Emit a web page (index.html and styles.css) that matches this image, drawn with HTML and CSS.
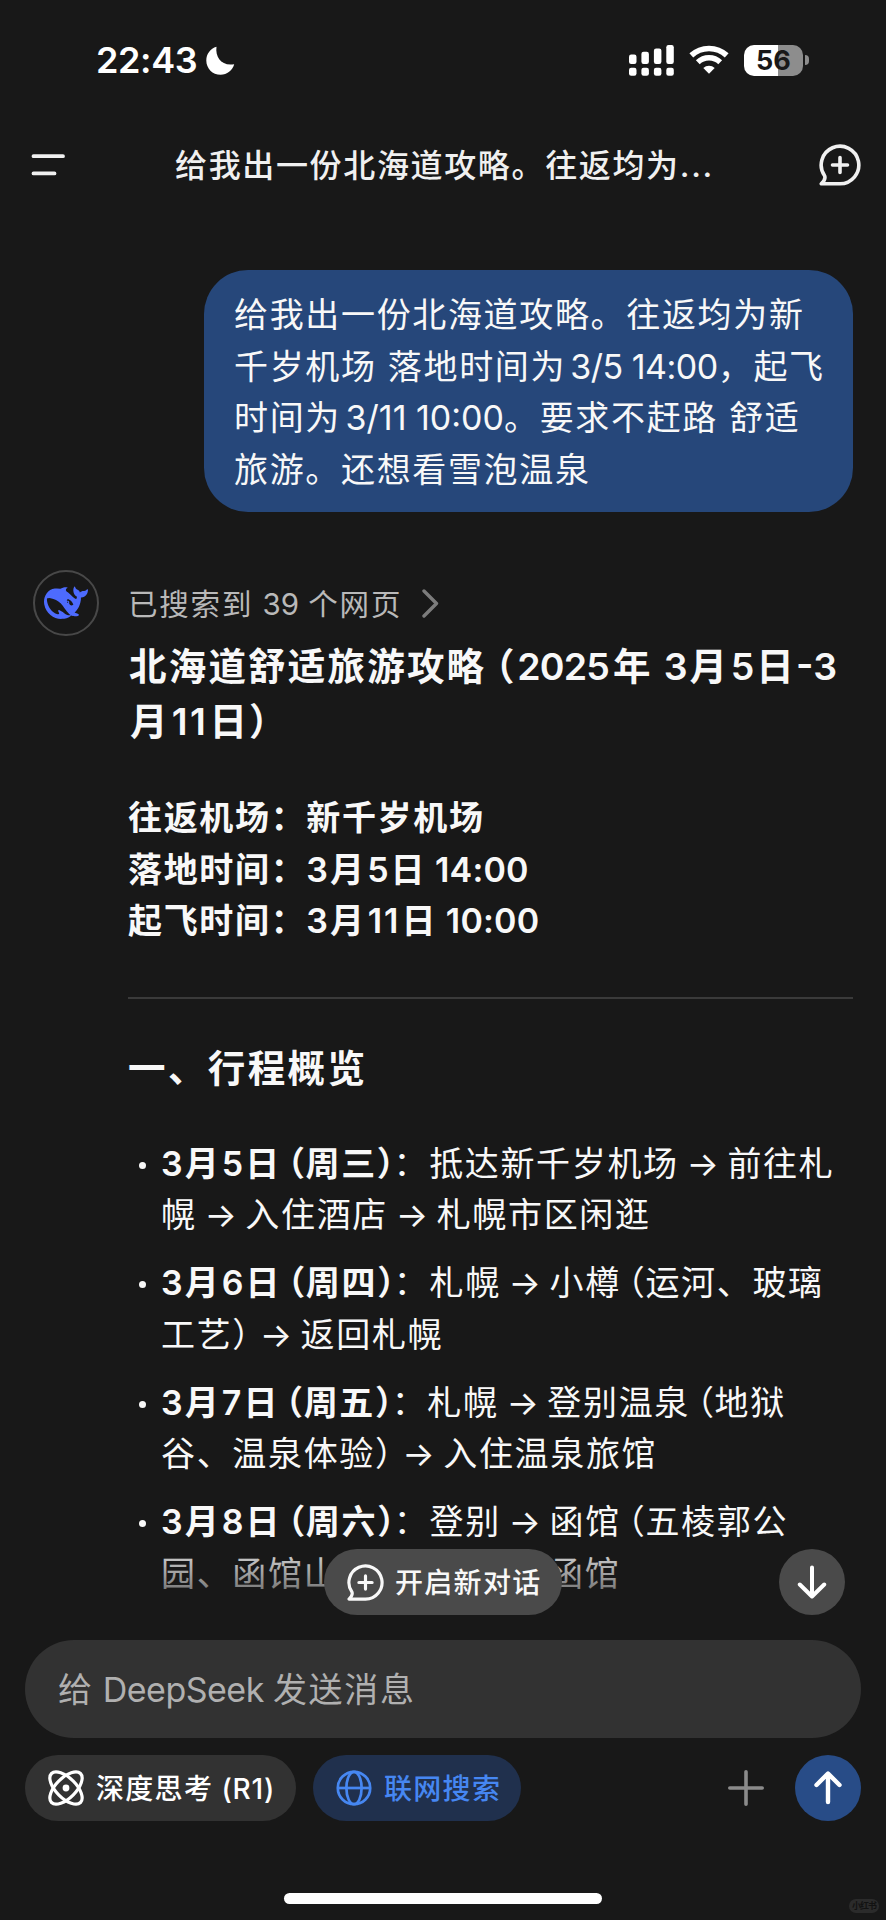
FILE: index.html
```html
<!DOCTYPE html>
<html lang="zh-CN">
<head>
<meta charset="utf-8">
<title>DeepSeek</title>
<link rel="stylesheet" href="styles.css">
</head>
<body>
<svg width="0" height="0" class="defs" aria-hidden="true">
  <symbol id="chat-plus" viewBox="0 0 42 42">
    <path d="M21 39.8A18.8 18.8 0 1 0 5.6 31.8C6.6 34 5.6 36.500 2.300 39.800Z" fill="none" stroke="currentColor" stroke-width="3.600" stroke-linejoin="round"/>
    <path d="M21 13.500v15M13.500 21h15" fill="none" stroke="currentColor" stroke-width="3.600" stroke-linecap="round"/>
  </symbol>
</svg>
<div class="phone">
  <div class="status">
    <span class="clock">22:43</span>
    <svg class="moon" viewBox="0 0 29 29"><path d="M10.500 0.800C9 11.500 16 20.500 28.200 18.200C26.500 24.500 21 28.700 14.600 28.700C6.500 28.700 0.300 22.400 0.300 14.400C0.300 8.200 4.200 2.600 10.500 0.800Z" fill="#fff"/></svg>
    <svg class="signal" viewBox="0 0 45 31" fill="#fff">
      <rect x="0" y="9.600" width="7.500" height="9.400" rx="2.200"/><rect x="12.400" y="6.700" width="7.500" height="12.300" rx="2.200"/><rect x="24.900" y="3.500" width="7.500" height="15.500" rx="2.200"/><rect x="37.300" y="0" width="7.500" height="19" rx="2.200"/>
      <rect x="0" y="22.800" width="7.500" height="8" rx="2.200"/><rect x="12.400" y="22.800" width="7.500" height="8" rx="2.200"/><rect x="24.900" y="22.800" width="7.500" height="8" rx="2.200"/><rect x="37.300" y="22.800" width="7.500" height="8" rx="2.200"/>
    </svg>
    <svg class="wifi" viewBox="0 0 40 29">
      <path d="M2.300 10.400A26 26 0 0 1 37.700 10.400" fill="none" stroke="#fff" stroke-width="5.600"/>
      <path d="M8.800 17.200A16.500 16.500 0 0 1 31.200 17.200" fill="none" stroke="#fff" stroke-width="5.600"/>
      <path d="M20 28.800L14.300 23A8.500 8.500 0 0 1 25.700 23Z" fill="#fff"/>
    </svg>
    <div class="battery"><span>56</span></div>
    <i class="nub"></i>
  </div>

  <div class="header">
    <svg class="menu" viewBox="0 0 34 24"><path d="M2.500 3.200H32M2.500 20.400H23.500" stroke="#f0f0f0" stroke-width="3.800" stroke-linecap="round"/></svg>
    <div class="title">给我出一份北海道攻略。往返均为<span class="dots">...</span></div>
    <svg class="new"><use href="#chat-plus"/></svg>
  </div>

  <div class="chat">
    <div class="bubble">
      <p>给我出一份北海道攻略。往返均为新</p>
      <p>千岁机场 落地时间为<span class="n g"> 3/5 14:00</span>，起飞</p>
      <p>时间为<span class="n g wide"> 3/11 10:00</span>。要求不赶路 舒适</p>
      <p>旅游。还想看雪泡温泉</p>
    </div>

    <div class="answer">
      <div class="avatar"><svg viewBox="0 0 24 24"><path fill="#4d6bfe" d="M23.748 4.482c-.254-.124-.364.113-.512.234-.051.039-.094.09-.137.136-.372.397-.806.657-1.373.626-.829-.046-1.537.214-2.163.848-.133-.782-.575-1.248-1.247-1.548-.352-.156-.708-.311-.955-.65-.172-.241-.219-.51-.305-.774-.055-.16-.11-.323-.293-.35-.2-.031-.278.136-.356.276-.313.572-.434 1.202-.422 1.84.027 1.436.633 2.58 1.838 3.393.137.093.172.187.129.323-.082.28-.18.552-.266.833-.055.179-.137.217-.329.14a5.526 5.526 0 01-1.736-1.18c-.857-.828-1.631-1.742-2.597-2.458a11.365 11.365 0 00-.689-.471c-.985-.957.13-1.743.388-1.836.27-.098.093-.432-.779-.428-.872.004-1.67.295-2.687.684a3.055 3.055 0 01-.465.137 9.597 9.597 0 00-2.883-.102c-1.885.21-3.39 1.102-4.497 2.623C.082 8.606-.231 10.684.152 12.85c.403 2.284 1.569 4.175 3.36 5.653 1.858 1.533 3.997 2.284 6.438 2.14 1.482-.085 3.133-.284 4.994-1.86.47.234.962.327 1.78.397.63.059 1.236-.03 1.705-.128.735-.156.684-.837.419-.961-2.155-1.004-1.682-.595-2.113-.926 1.096-1.296 2.746-2.642 3.392-7.003.05-.347.007-.565 0-.845-.004-.17.035-.237.23-.256a4.173 4.173 0 001.545-.475c1.396-.763 1.96-2.015 2.093-3.517.02-.23-.004-.467-.247-.588zM11.581 18c-2.089-1.642-3.102-2.183-3.52-2.16-.392.024-.321.471-.235.763.09.288.207.486.371.739.114.167.192.416-.113.603-.673.416-1.842-.14-1.897-.167-1.361-.802-2.5-1.86-3.301-3.307-.774-1.393-1.224-2.887-1.298-4.482-.02-.386.093-.522.477-.592a4.696 4.696 0 011.529-.039c2.132.312 3.946 1.265 5.468 2.774.868.86 1.525 1.887 2.202 2.891.72 1.066 1.494 2.082 2.48 2.914.348.292.625.514.891.677-.802.09-2.14.11-3.054-.614zm1-6.44a.306.306 0 01.415-.287.302.302 0 01.2.288.306.306 0 01-.31.307.303.303 0 01-.304-.308zm3.11 1.596c-.2.081-.399.151-.59.16a1.245 1.245 0 01-.798-.254c-.274-.23-.47-.358-.552-.758a1.73 1.73 0 01.016-.588c.07-.327-.008-.537-.239-.727-.187-.156-.426-.199-.688-.199a.559.559 0 01-.254-.078c-.11-.054-.2-.19-.114-.358.028-.054.16-.186.192-.21.356-.202.767-.136 1.146.016.352.144.618.408 1.001.782.391.451.462.576.685.914.176.265.336.537.445.848.067.195-.019.354-.25.452z"/></svg></div>
      <div class="content">
        <div class="search"><div>已搜索到<span class="count"> 39 </span>个网页</div><svg viewBox="0 0 17 29"><path d="M2 2L14.500 14.500L2 27" fill="none" stroke="#7c7c7c" stroke-width="3.400" stroke-linecap="round" stroke-linejoin="round"/></svg></div>
        <h1><span class="line">北海道舒适旅游攻略<i class="po">（</i><span class="n year">2025</span>年<span class="n d"> 3</span>月<span class="n d">5</span>日<span class="n d end">-3</span></span><span class="line second">月<span class="d2">11</span>日）</span></h1>
        <div class="facts">
          <p>往返机场：新千岁机场</p>
          <p>落地时间：<span class="d first">3</span>月<span class="d">5</span>日<span class="t"> 14:00</span></p>
          <p>起飞时间：<span class="d first">3</span>月<span class="d2">11</span>日<span class="t"> 10:00</span></p>
        </div>
        <hr>
        <h2>一、行程概览</h2>
        <ul>
          <li><span class="line"><b><span class="d first">3</span>月<span class="d">5</span>日<i class="po">（</i>周三）</b>：抵达新千岁机场<span class="ar"> → </span>前往札</span><span class="line">幌<span class="ar"> → </span>入住酒店<span class="ar"> → </span>札幌市区闲逛</span></li>
          <li><span class="line"><b><span class="d first">3</span>月<span class="d">6</span>日<i class="po">（</i>周四）</b>：札幌<span class="ar"> → </span>小樽<i class="po">（</i>运河、玻璃</span><span class="line">工艺<i class="pc">）</i><span class="ar"> → </span>返回札幌</span></li>
          <li><span class="line"><b><span class="d first">3</span>月<span class="d">7</span>日<i class="po">（</i>周五）</b>：札幌<span class="ar"> → </span>登别温泉<i class="po">（</i>地狱</span><span class="line">谷、温泉体验<i class="pc">）</i><span class="ar"> → </span>入住温泉旅馆</span></li>
          <li><span class="line"><b><span class="d first">3</span>月<span class="d">8</span>日<i class="po">（</i>周六）</b>：登别<span class="ar"> → </span>函馆<i class="po">（</i>五棱郭公</span><span class="line"><span class="lead">园、函馆山</span>函馆</span></li>
        </ul>
      </div>
    </div>
    <div class="fade"></div>
    <div class="floating">
      <div class="newchat"><svg><use href="#chat-plus"/></svg><span>开启新对话</span></div>
      <div class="down"><svg viewBox="0 0 32 34"><path d="M16 2.500V31M3.800 19.500L16 31.500L28.200 19.500" fill="none" stroke="#fff" stroke-width="4" stroke-linecap="round" stroke-linejoin="round"/></svg></div>
    </div>
  </div>

  <div class="composer">
    <div class="input">给<span class="n"> DeepSeek </span>发送消息</div>
    <div class="tools">
      <div class="pill think"><svg viewBox="0 0 36 36"><g fill="none" stroke="#fff" stroke-width="3.200"><ellipse cx="18" cy="18" rx="20.500" ry="10" transform="rotate(45 18 18)"/><ellipse cx="18" cy="18" rx="20.500" ry="10" transform="rotate(-45 18 18)"/></g><circle cx="18" cy="18" r="3.400" fill="#fff"/></svg><div>深度思考<span class="r1"> (R1)</span></div></div>
      <div class="pill web"><svg viewBox="0 0 36 36"><g fill="none" stroke="#4687f2" stroke-width="2.700"><circle cx="18" cy="18" r="16.200"/><ellipse cx="18" cy="18" rx="7.600" ry="16.200"/><path d="M2 18H34"/></g></svg><div>联网搜索</div></div>
      <svg class="plus" viewBox="0 0 36 36"><path d="M18 1.800V34.200M1.800 18H34.200" stroke="#8b8b8b" stroke-width="3.600" stroke-linecap="round"/></svg>
      <div class="send"><svg viewBox="0 0 32 34"><path d="M16 31V3M4.500 14L16 2.500L27.500 14" fill="none" stroke="#fff" stroke-width="4.400" stroke-linecap="round" stroke-linejoin="round"/></svg></div>
    </div>
    <div class="home"></div>
    <div class="mark">小红书</div>
  </div>
</div>
</body>
</html>
```
FILE: styles.css
```css
* { box-sizing: border-box; }
body { margin: 0; background: #181818; }
p, h1, h2, ul { margin: 0; padding: 0; font-weight: inherit; }
i { font-style: normal; }
svg { display: block; flex: none; }
.defs { position: absolute; }

.phone {
  width: 886px;
  height: 1920px;
  display: flex;
  flex-direction: column;
  overflow: hidden;
  background: #181818;
  color: #f8f8f8;
  font-family: Inter, "Noto Sans CJK SC", sans-serif;
  font-size: 34px;
  letter-spacing: 1.66px;
  white-space: nowrap;
}
.line { display: block; }

/* spacing of Latin digits and full-width brackets inside Chinese text */
.n { letter-spacing: -0.5px; }
.n.g { margin-left: -5px; }
.n.wide { letter-spacing: 0; }
.d { letter-spacing: 0; margin: 0 2px 0 1.5px; }
.d.first { margin-left: 0; }
.d2 { letter-spacing: 2px; margin: 0 1px 0 2px; }
.t { letter-spacing: 0.2px; }
.po, .pc { font-feature-settings: "halt"; letter-spacing: 0.6px; }
.po { margin-left: 7px; }
.pc { margin-right: 2px; }
.ar { letter-spacing: 0.2px; margin: 0 -1.500px 0 -2px; }

/* status bar */
.status { height: 120px; padding: 0 77px 0 96px; display: flex; align-items: center; }
.clock { font-size: 36px; font-weight: 600; letter-spacing: -0.4px; width: 110px; color: #fff; }
.moon { width: 29px; height: 29px; }
.signal { width: 45px; height: 31px; margin-left: auto; }
.wifi { width: 40px; height: 29px; margin: 0 15px 2px; }
.battery {
  width: 59px;
  height: 31px;
  border-radius: 10px;
  background: linear-gradient(90deg, #fff 57%, #8d8d8d 57%);
  color: #181818;
  font-size: 27px;
  font-weight: 700;
  letter-spacing: 0;
  line-height: 31px;
  text-align: center;
}
.nub { width: 4px; height: 10px; margin-left: 2px; border-radius: 0 5px 5px 0; background: #8d8d8d; }

/* header */
.header { height: 90px; padding: 0 25px 0 31px; display: flex; align-items: center; justify-content: space-between; color: #f0f0f0; }
.menu { width: 34px; height: 24px; }
.title { font-size: 32px; font-weight: 500; letter-spacing: 1.65px; padding: 0 0 4px 5px; }
.dots { letter-spacing: 1.7px; }
.new { width: 42px; height: 42px; }

/* conversation */
.chat { position: relative; height: 1422px; padding: 60px 33px 0; overflow: hidden; }
.bubble { width: 649px; height: 242px; margin-left: auto; padding: 19px 30px 0; border-radius: 44px; background: #26477a; line-height: 51.600px; }
.answer { display: flex; padding-top: 58px; }
.avatar { width: 66px; height: 66px; border: 2px solid #484848; border-radius: 50%; display: flex; align-items: center; justify-content: center; }
.avatar svg { width: 44px; height: 44px; }
.content { width: 725px; margin-left: 29px; }
.search { height: 66px; display: flex; align-items: center; color: #b9b9b9; font-size: 29.500px; letter-spacing: 1.8px; white-space: pre; }
.search div { padding-bottom: 2px; }
.search svg { width: 17px; height: 29px; margin-left: 20px; }
.count { letter-spacing: 0; margin: 0 1px; }
h1 { font-size: 37.500px; font-weight: 600; letter-spacing: 2.2px; line-height: 55px; margin-top: 3px; padding-left: 1px; }
h1 .po { margin: 0 2px 0 9.500px; }
h1 .year { margin-right: 4px; letter-spacing: -0.8px; }
h1 .d { letter-spacing: 0; }
h1 .d.end { margin: 0; }
h1 .second { padding-left: 1px; }
h1 .d2 { letter-spacing: 2.500px; margin-right: 1px; }
.facts { font-weight: 600; line-height: 51.600px; margin-top: 43px; }
hr { height: 2px; margin: 50px 0 0; border: 0; background: #3a3a3a; }
h2 { font-size: 37.500px; font-weight: 600; letter-spacing: 2.4px; line-height: 56px; margin-top: 42px; }
ul { list-style: none; margin-top: 41px; line-height: 51.600px; }
li { position: relative; padding-left: 33px; margin-bottom: 16.300px; }
li::before { content: ""; position: absolute; left: 11px; top: 24px; width: 7px; height: 7px; border-radius: 50%; background: #f8f8f8; }
li b { font-weight: 600; margin-right: -2px; }
.lead { display: inline-block; width: 388px; }

.fade { position: absolute; left: 0; right: 0; bottom: 0; height: 96px; background: linear-gradient(rgba(24,24,24,0), #181818); }
.floating { position: absolute; left: 324px; right: 41px; top: 1339px; display: flex; justify-content: space-between; }
.newchat { width: 238px; height: 66px; border-radius: 33px; background: #4a4a4a; display: flex; align-items: center; gap: 11px; padding-left: 23px; font-size: 28px; font-weight: 500; letter-spacing: 1.3px; }
.newchat svg { width: 37px; height: 37px; }
.newchat span { padding-bottom: 2px; }
.down, .send { width: 66px; height: 66px; border-radius: 50%; background: #4a4a4a; display: flex; align-items: center; justify-content: center; }
.down svg, .send svg { width: 32px; height: 34px; }

/* composer */
.composer { position: relative; padding: 8px 25px 0; }
.input { height: 98px; border-radius: 49px; background: #323232; padding-left: 33px; line-height: 100px; color: #b0b0b0; white-space: pre; }
.tools { display: flex; align-items: center; margin-top: 17px; }
.pill { height: 66px; border-radius: 33px; display: flex; align-items: center; gap: 12px; padding: 0 0 0 23px; font-size: 28px; font-weight: 500; letter-spacing: 1.3px; white-space: pre; }
.pill svg { width: 36px; height: 36px; }
.pill div { padding-bottom: 2px; }
.think { width: 271px; background: #323232; color: #fff; }
.r1 { letter-spacing: 0.8px; }
.web { width: 208px; margin-left: 17px; background: #20304d; color: #4687f2; }
.plus { width: 36px; height: 36px; margin: 0 31px 0 auto; }
.send { background: #284c87; }
.home { width: 318px; height: 11px; border-radius: 6px; background: #fff; margin: 72px auto 0; }
.mark { position: absolute; right: 7px; top: 267px; width: 30px; height: 14px; border-radius: 7px; background: #2b2b2b; color: #121212; font-size: 9px; font-weight: 700; letter-spacing: -1px; line-height: 14px; text-align: center; }
```
